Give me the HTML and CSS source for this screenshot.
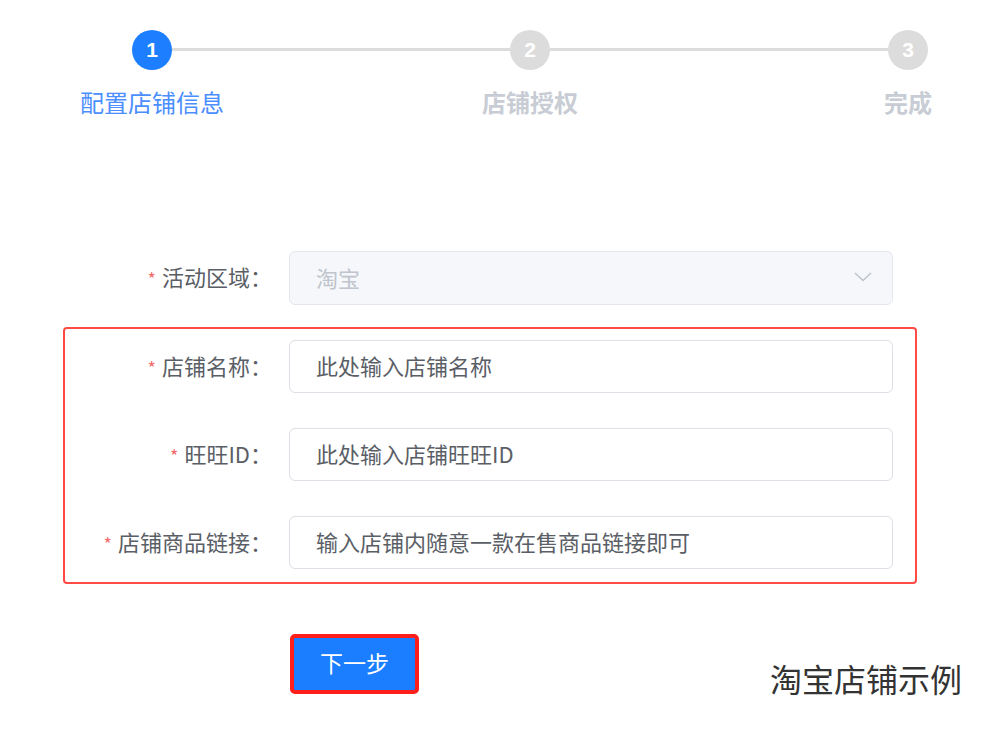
FILE: index.html
```html
<!DOCTYPE html>
<html lang="zh-CN">
<head>
<meta charset="utf-8">
<title>店铺配置</title>
<link rel="stylesheet" href="styles.css">
</head>
<body>
<div class="page">
  <div class="steps">
    <div class="step step-active">
      <div class="step-circle">1</div>
      <div class="step-title">配置店铺信息</div>
    </div>
    <div class="step-line"></div>
    <div class="step">
      <div class="step-circle">2</div>
      <div class="step-title">店铺授权</div>
    </div>
    <div class="step-line"></div>
    <div class="step">
      <div class="step-circle">3</div>
      <div class="step-title">完成</div>
    </div>
  </div>

  <div class="form">
    <div class="row row-plain">
      <label class="label"><span class="req">*</span>活动区域：</label>
      <div class="control select">
        <span class="select-value">淘宝</span>
        <svg class="chevron" width="18" height="10" viewBox="0 0 18 10"><path d="M1 1 L9 8.5 L17 1" fill="none" stroke="#c0c4cc" stroke-width="1.6"/></svg>
      </div>
    </div>

    <div class="highlight">
      <div class="row">
        <label class="label"><span class="req">*</span>店铺名称：</label>
        <div class="control input">此处输入店铺名称</div>
      </div>
      <div class="row">
        <label class="label"><span class="req">*</span>旺旺ID：</label>
        <div class="control input">此处输入店铺旺旺ID</div>
      </div>
      <div class="row">
        <label class="label"><span class="req">*</span>店铺商品链接：</label>
        <div class="control input">输入店铺内随意一款在售商品链接即可</div>
      </div>
    </div>

    <div class="footer">
      <button class="btn">下一步</button>
      <div class="caption">淘宝店铺示例</div>
    </div>
  </div>
</div>
</body>
</html>
```

FILE: styles.css
```css
* { box-sizing: border-box; }
html, body { margin: 0; padding: 0; background: #fff; }
body {
  font-family: "Noto Sans CJK SC", "Noto Sans", "Liberation Sans", sans-serif;
  width: 997px;
  height: 744px;
  overflow: hidden;
}
.page { padding-top: 30px; }

.steps {
  display: flex;
  align-items: flex-start;
  padding-left: 132px;
}
.step {
  flex: none;
  width: 40px;
  display: flex;
  flex-direction: column;
  align-items: center;
}
.step-circle {
  width: 40px;
  height: 40px;
  border-radius: 50%;
  background: #dcdcdc;
  color: #fff;
  font-family: "Liberation Sans", Arial, sans-serif;
  font-weight: bold;
  font-size: 21px;
  line-height: 40px;
  text-align: center;
}
.step-active .step-circle { background: #1d7fff; }
.step-title {
  margin-top: 17px;
  white-space: nowrap;
  font-size: 24px;
  line-height: 30px;
  font-weight: bold;
  color: #c8ccd4;
}
.step-active .step-title { color: #4a8eff; font-weight: normal; }
.step-line {
  flex: none;
  width: 338px;
  height: 3px;
  margin-top: 18px;
  background: #dcdcdc;
}

.form {
  margin-top: 134px;
  margin-left: 63px;
  width: 854px;
}
.row {
  display: flex;
  align-items: center;
  gap: 17px;
}
.row-plain { padding-left: 2px; }
.label {
  flex: none;
  width: 207px;
  text-align: right;
  font-size: 22px;
  color: #5a5e66;
  white-space: nowrap;
  margin-bottom: 4px;
}
.req {
  color: #f56c6c;
  margin-right: 6px;
  font-size: 18px;
}
.control {
  flex: none;
  width: 604px;
  height: 54px;
  border-radius: 6px;
  display: flex;
  align-items: center;
  padding: 0 26px 3px;
  font-size: 22px;
}
.input {
  border: 1px solid #dcdfe6;
  background: #fff;
  color: #5a5e66;
  height: 53px;
}
.select {
  border: 1px solid #e4e7ed;
  background: #f5f7fa;
  justify-content: space-between;
  padding-right: 20px;
}
.select-value { color: #c0c4cc; }

.highlight {
  margin-top: 22px;
  border: 2px solid #ff4a45;
  border-radius: 4px;
  padding: 11px 22px 13px 0;
  display: flex;
  flex-direction: column;
  gap: 35px;
}

.footer {
  display: flex;
  align-items: flex-start;
  margin-top: 50px;
  padding-left: 227px;
}
.btn {
  flex: none;
  width: 129px;
  height: 60px;
  border: 4px solid #ff1f1a;
  border-radius: 5px;
  background: #1b7dff;
  color: #fff;
  font-family: inherit;
  font-size: 23px;
  padding: 0 0 3px;
  line-height: 47px;
}
.caption {
  flex: none;
  margin-left: 351px;
  margin-top: 22px;
  font-size: 32px;
  line-height: 44px;
  color: #333;
  white-space: nowrap;
}
```
